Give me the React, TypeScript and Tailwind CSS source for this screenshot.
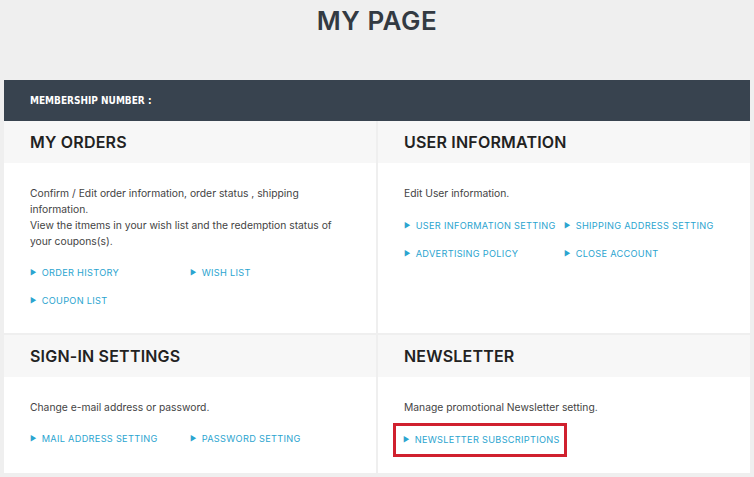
import React from "react";

const Link = ({ t }: { t: string }) => (
  <span className="flex items-center gap-[5px] text-[9.2px] leading-[16px] tracking-[0.3px] text-[#2ba4cf] whitespace-nowrap">
    <span className="text-[7px]">▶</span>
    {t}
  </span>
);

const Panel = ({ title, children, h }: { title: string; children: React.ReactNode; h: string }) => (
  <div className={`bg-white flex flex-col ${h}`}>
    <div className="bg-[#f7f7f7] h-[42px] flex items-center px-[26px] text-[16px] font-semibold text-[#222] tracking-[0.2px]">{title}</div>
    <div className="px-[26px] pt-[22px] text-[10.3px] leading-[16px] text-[#444]">{children}</div>
  </div>
);

export default function App() {
  return (
    <div className="w-[754px] h-[477px] bg-[#efefef] overflow-hidden" style={{ fontFamily: "Inter, 'Open Sans', sans-serif" }}>
      <div className="h-[80px] pt-[4px] flex justify-center">
        <h1 className="text-[26px] font-semibold text-[#333a42] tracking-[0.5px] leading-[34px]">MY PAGE</h1>
      </div>
      <div className="mx-[4px] w-[746px]">
        <div className="h-[41px] bg-[#38434f] flex items-center px-[26px] text-[10px] text-white font-semibold" style={{ fontFamily: "'Liberation Sans Narrow', 'DejaVu Sans Condensed', sans-serif" }}>
          MEMBERSHIP NUMBER :
        </div>
        <div className="grid grid-cols-2 gap-[2px]">
          <Panel title="MY ORDERS" h="h-[212px]">
            <p>Confirm / Edit order information, order status , shipping<br />information.<br />View the itmems in your wish list and the redemption status of<br />your coupons(s).</p>
            <div className="grid grid-cols-[160px_1fr] gap-y-[12px] mt-[16px]">
              <Link t="ORDER HISTORY" /><Link t="WISH LIST" /><Link t="COUPON LIST" />
            </div>
          </Panel>
          <Panel title="USER INFORMATION" h="h-[212px]">
            <p>Edit User information.</p>
            <div className="grid grid-cols-[160px_1fr] gap-y-[12px] mt-[17px]">
              <Link t="USER INFORMATION SETTING" /><Link t="SHIPPING ADDRESS SETTING" />
              <Link t="ADVERTISING POLICY" /><Link t="CLOSE ACCOUNT" />
            </div>
          </Panel>
          <Panel title="SIGN-IN SETTINGS" h="h-[138px]">
            <p>Change e-mail address or password.</p>
            <div className="grid grid-cols-[160px_1fr] mt-[16px]">
              <Link t="MAIL ADDRESS SETTING" /><Link t="PASSWORD SETTING" />
            </div>
          </Panel>
          <Panel title="NEWSLETTER" h="h-[138px]">
            <p>Manage promotional Newsletter setting.</p>
            <div className="mt-[8px] -ml-[11px] w-[174px] h-[34px] border-[3px] border-[#d0202e] flex items-center pl-[7px]">
              <Link t="NEWSLETTER SUBSCRIPTIONS" />
            </div>
          </Panel>
        </div>
      </div>
    </div>
  );
}
